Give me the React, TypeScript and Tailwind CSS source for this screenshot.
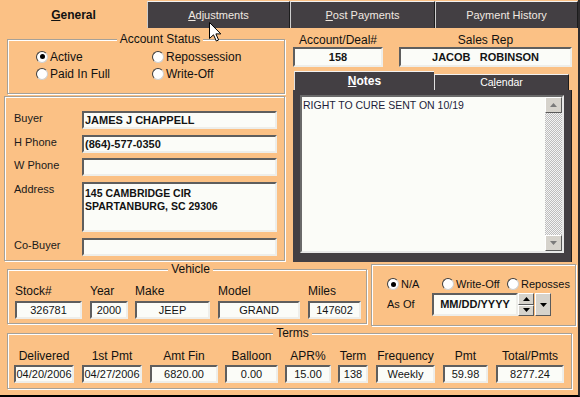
import React from 'react';
import clsx from 'clsx';

type FieldProps = {
  value?: string;
  bold?: boolean;
  left?: boolean;
  className?: string;
};

const Field = ({ value = '', bold, left, className }: FieldProps) => (
  <div
    className={clsx(
      'flex h-[18px] items-center overflow-hidden whitespace-pre border-2 border-t-[#5e5e5e] border-l-[#5e5e5e] border-r-[#eeeeea] border-b-[#eeeeea] bg-[#fbfcf8] text-[11px] leading-none text-[#141414]',
      bold && 'font-bold',
      left ? 'justify-start pl-[1px]' : 'justify-center',
      className,
    )}
  >
    {value}
  </div>
);

const Radio = ({ label, checked, className }: { label: string; checked?: boolean; className?: string }) => (
  <div className={clsx('flex shrink-0 items-center gap-[2px]', className)}>
    <span className="flex size-[12px] shrink-0 items-center justify-center rounded-full border border-[#3c3c3c] border-r-[#cfcfcf] border-b-[#cfcfcf] bg-white">
      {checked && <span className="size-[5px] rounded-full bg-black" />}
    </span>
    <span className="whitespace-nowrap">{label}</span>
  </div>
);

const GroupBox = ({ title, className, children }: { title?: string; className?: string; children?: React.ReactNode }) => (
  <fieldset
    className={clsx(
      'border border-[#a6a198] shadow-[inset_1px_1px_0_#fff,1px_1px_0_#fff]',
      className,
    )}
  >
    {title && (
      <legend className="mx-auto bg-[#fbc185] px-[3px] text-[12px] leading-[14px]">{title}</legend>
    )}
    {children}
  </fieldset>
);

const Tab = ({ className, children }: { className: string; children: React.ReactNode }) => (
  <div
    className={clsx(
      'mt-[1px] flex h-[27px] items-center justify-center border-t border-l border-r border-t-[#f2f2f2] border-l-[#cfcfcf] border-r-[#1c1c1c] bg-[#433f43] text-[11px] text-[#f1e9e1]',
      className,
    )}
  >
    <span>{children}</span>
  </div>
);

const Col = ({ label, value, className, gap = 'mt-[3px]' }: { label: string; value: string; className: string; gap?: string }) => (
  <div className={clsx('flex shrink-0 flex-col items-center', className)}>
    <span className="whitespace-nowrap text-[12px] leading-[14px]">{label}</span>
    <Field value={value} className={clsx('w-full', gap)} />
  </div>
);

const Triangle = ({ up, color = '#7a7a7a' }: { up?: boolean; color?: string }) => (
  <svg width="7" height="4" viewBox="0 0 7 4">
    <polygon points={up ? '0,4 7,4 3.5,0' : '0,0 7,0 3.5,4'} fill={color} />
  </svg>
);

const RaisedButton = ({ className, children }: { className?: string; children?: React.ReactNode }) => (
  <div
    className={clsx(
      'flex items-center justify-center border border-t-white border-l-white border-r-[#5a5a5a] border-b-[#5a5a5a] bg-[#d6d3cc]',
      className,
    )}
  >
    {children}
  </div>
);

const BuyerRow = ({ label, value, className, tall }: { label: string; value?: React.ReactNode; className?: string; tall?: boolean }) => (
  <div className={clsx('flex items-start', className)}>
    <span className="w-[68px] pt-[1px] text-[11px] leading-[13px] text-[#1a1a1a]">{label}</span>
    {tall ? (
      <div className="h-[50px] w-[195px] border-2 border-t-[#5e5e5e] border-l-[#5e5e5e] border-r-[#eeeeea] border-b-[#eeeeea] bg-[#fbfcf8] pl-[1px] pt-[3px] text-[10.5px] font-bold leading-[13px]">
        {value}
      </div>
    ) : (
      <Field value={value as string} bold left className="w-[195px]" />
    )}
  </div>
);

const App = () => {
  return (
    <div className="relative h-[397px] w-[580px] overflow-hidden border-r-2 border-b-2 border-r-[#2e2c2e] border-b-black bg-[#fbc185] font-['Liberation_Sans',Arial,sans-serif] text-[#111]">
      {/* top tabs */}
      <div className="flex h-[28px]">
        <div className="flex w-[147px] items-center justify-center pt-[2px] text-[12px] font-bold">
          <span>
            <u>G</u>eneral
          </span>
        </div>
        <Tab className="w-[143px]">
          <u>A</u>djustments
        </Tab>
        <Tab className="w-[145px]">
          <u>P</u>ost Payments
        </Tab>
        <Tab className="w-[143px]">Payment History</Tab>
      </div>

      {/* account / notes row */}
      <div className="flex items-start">
        <div className="ml-[4px] w-[281px]">
          <GroupBox title="Account Status" className="mt-[4px] ml-[3px] h-[62px] w-[278px] pl-[28px] pt-[2px]">
            <div className="grid grid-cols-[116px_auto] text-[12px]">
              <Radio label="Active" checked className="h-[17px]" />
              <Radio label="Repossession" className="h-[17px]" />
              <Radio label="Paid In Full" className="h-[17px]" />
              <Radio label="Write-Off" className="h-[17px]" />
            </div>
          </GroupBox>

          <div className="mt-[2px] h-[165px] w-[281px] border border-[#a6a198] pl-[9px] pt-[14px] shadow-[inset_1px_1px_0_#fff,1px_1px_0_#fff]">
            <BuyerRow label="Buyer" value="JAMES J CHAPPELL" />
            <BuyerRow label="H Phone" value="(864)-577-0350" className="mt-[6px]" />
            <BuyerRow label="W Phone" value="" className="mt-[5px]" />
            <BuyerRow
              label="Address"
              tall
              className="mt-[6px]"
              value={
                <>
                  145 CAMBRIDGE CIR
                  <br />
                  SPARTANBURG, SC 29306
                </>
              }
            />
            <BuyerRow label="Co-Buyer" value="" className="mt-[6px]" />
          </div>
        </div>

        <div className="ml-[8px] w-[279px] pt-[5px]">
          <div className="flex">
            <div className="flex w-[90px] flex-col items-center">
              <span className="text-[12px] leading-[14px]">Account/Deal#</span>
              <Field value="158" bold className="h-[20px] w-full" />
            </div>
            <div className="ml-[16px] flex w-[173px] flex-col items-center">
              <span className="text-[12px] leading-[14px]">Sales Rep</span>
              <Field value="JACOB   ROBINSON" bold className="h-[20px] w-full" />
            </div>
          </div>

          {/* notes tabs */}
          <div className="mt-[4px] flex h-[19px] items-end">
            <div className="ml-[1px] flex h-[19px] w-[140px] items-center justify-center border-t border-l border-t-[#f2f2f2] border-l-[#e0e0e0] bg-[#433f43] text-[12px] font-bold text-white">
              <span>
                <u>N</u>otes
              </span>
            </div>
            <div className="flex h-[16px] w-[135px] items-center justify-center border-t border-l border-r border-t-[#f2f2f2] border-l-[#e0e0e0] border-r-[#1c1c1c] bg-[#433f43] text-[10.5px] text-white">
              <span>
                Ca<u>l</u>endar
              </span>
            </div>
          </div>

          <div className="h-[172px] w-[279px] border-r border-r-[#1e1e1e] bg-[#433f43] pl-[7px] pr-[7px] pt-[5px] pb-[9px]">
            <div className="flex h-full border-2 border-t-[#6a6a6a] border-l-[#6a6a6a] border-r-[#e8e8e8] border-b-[#e8e8e8] bg-[#fbfcf8]">
              <div className="flex-1 pl-[1px] pt-[2px] text-[10.5px] leading-[13px] text-[#1c1c3a]">
                RIGHT TO CURE SENT ON 10/19
              </div>
              <div className="flex w-[17px] flex-col">
                <RaisedButton className="h-[16px]">
                  <Triangle up />
                </RaisedButton>
                <div className="flex-1 bg-[repeating-conic-gradient(#bdbdbd_0%_25%,#f4f4f4_0%_50%)] bg-[length:2px_2px]" />
                <RaisedButton className="h-[16px]">
                  <Triangle />
                </RaisedButton>
              </div>
            </div>
          </div>
        </div>
      </div>

      {/* vehicle row */}
      <div className="flex items-start">
        <GroupBox title="Vehicle" className="ml-[7px] h-[62px] w-[360px] pl-[7px] pt-[8px]">
          <div className="flex">
            <Col label="Stock#" value="326781" className="w-[67px] !items-start" />
            <Col label="Year" value="2000" className="ml-[8px] w-[38px] !items-start" />
            <Col label="Make" value="JEEP" className="ml-[7px] w-[75px] !items-start" />
            <Col label="Model" value="GRAND" className="ml-[8px] w-[82px] !items-start" />
            <Col label="Miles" value="147602" className="ml-[8px] w-[53px] !items-start" />
          </div>
        </GroupBox>

        <div className="ml-[4px] mt-[2px] h-[62px] w-[205px] border border-[#a6a198] pl-[15px] pt-[11px] shadow-[inset_1px_1px_0_#fff,1px_1px_0_#fff]">
          <div className="flex h-[16px] w-[184px] items-center text-[11px]">
            <Radio label="N/A" checked className="w-[55px]" />
            <Radio label="Write-Off" className="w-[65px]" />
            <Radio label="Reposses" />
          </div>
          <div className="mt-[1px] flex h-[23px] items-center">
            <span className="w-[45px] text-[11px]">As Of</span>
            <Field value="MM/DD/YYYY" bold className="h-[23px] w-[86px] text-[10.5px]" />
            <div className="flex h-[23px] w-[16px] flex-col">
              <RaisedButton className="h-[11.5px]">
                <Triangle up color="#000" />
              </RaisedButton>
              <RaisedButton className="h-[11.5px]">
                <Triangle color="#000" />
              </RaisedButton>
            </div>
            <RaisedButton className="ml-[1px] h-[23px] w-[16px]">
              <Triangle color="#000" />
            </RaisedButton>
          </div>
        </div>
      </div>

      {/* terms row */}
      <GroupBox title="Terms" className="ml-[7px] h-[63px] w-[565px] pl-[6px] pt-[9px]">
        <div className="flex">
          <Col label="Delivered" value="04/20/2006" gap="mt-[2px]" className="w-[60px]" />
          <Col label="1st Pmt" value="04/27/2006" gap="mt-[2px]" className="ml-[8px] w-[60px]" />
          <Col label="Amt Fin" value="6820.00" gap="mt-[2px]" className="ml-[8px] w-[68px]" />
          <Col label="Balloon" value="0.00" gap="mt-[2px]" className="ml-[7px] w-[53px]" />
          <Col label="APR%" value="15.00" gap="mt-[2px]" className="ml-[7px] w-[46px]" />
          <Col label="Term" value="138" gap="mt-[2px]" className="ml-[7px] w-[30px]" />
          <Col label="Frequency" value="Weekly" gap="mt-[2px]" className="ml-[8px] w-[59px]" />
          <Col label="Pmt" value="59.98" gap="mt-[2px]" className="ml-[8px] w-[45px]" />
          <Col label="Total/Pmts" value="8277.24" gap="mt-[2px]" className="ml-[8px] w-[68px]" />
        </div>
      </GroupBox>

      {/* mouse pointer */}
      <svg className="absolute left-[209px] top-[22px]" width="13" height="20" viewBox="0 0 13 20">
        <path
          d="M0.5 0.5 L0.5 16.5 L4.5 12.8 L7.3 19 L9.6 18 L6.9 11.9 L11.8 11.9 Z"
          fill="#fff"
          stroke="#000"
          strokeWidth="1"
        />
      </svg>
    </div>
  );
};

export default App;
